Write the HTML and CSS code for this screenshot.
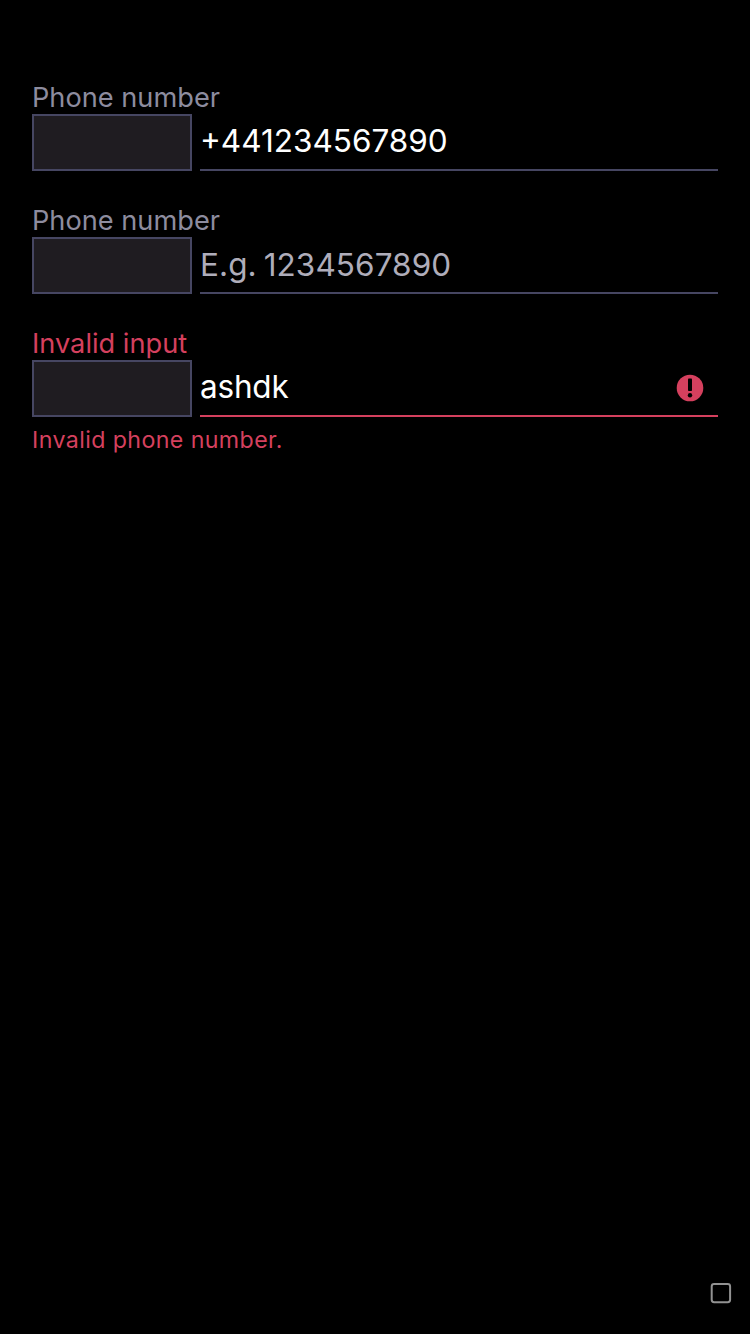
FILE: index.html
```
<!DOCTYPE html>
<html lang="en">
<head>
<meta charset="utf-8">
<title>Phone number</title>
<link rel="stylesheet" href="styles.css">
</head>
<body>
<main class="form">
  <section class="field">
    <div class="label"><span class="label-text">Phone number</span></div>
    <div class="row">
      <div class="country"></div>
      <div class="entry"><span class="value number">+441234567890</span></div>
    </div>
  </section>
  <section class="field">
    <div class="label"><span class="label-text">Phone number</span></div>
    <div class="row">
      <div class="country"></div>
      <div class="entry"><span class="value placeholder">E.g. 1234567890</span></div>
    </div>
  </section>
  <section class="field invalid">
    <div class="label"><span class="label-text">Invalid input</span></div>
    <div class="row">
      <div class="country"></div>
      <div class="entry">
        <span class="value word">ashdk</span>
        <svg class="alert" viewBox="0 0 28 28" aria-hidden="true">
          <circle cx="14" cy="14" r="13.3" fill="#d5405e"/>
          <rect x="12" y="4.5" width="4" height="12.5" rx="0.8" fill="#000"/>
          <circle cx="14" cy="21.2" r="2.2" fill="#000"/>
        </svg>
      </div>
    </div>
    <p class="message"><span class="message-text">Invalid phone number.</span></p>
  </section>
</main>
<footer class="footer">
  <svg class="square" viewBox="0 0 22 22" aria-hidden="true">
    <rect x="1.7" y="2" width="18.4" height="18.2" rx="2.4" fill="none" stroke="#929292" stroke-width="2"/>
  </svg>
</footer>
</body>
</html>
```
FILE: styles.css
```
* { box-sizing: border-box; }
body {
  margin: 0;
  height: 1334px;
  display: flex;
  flex-direction: column;
  justify-content: space-between;
  background: #000;
  color: #fff;
  font-family: Inter, "Liberation Sans", sans-serif;
  overflow: hidden;
}
.form {
  padding: 80px 32px 0;
  display: flex;
  flex-direction: column;
  gap: 32px;
}
.label {
  height: 34px;
  padding-top: 1px;
  font-size: 27.2px;
  line-height: 34px;
  color: #8d8c9f;
  white-space: nowrap;
}
.row { display: flex; gap: 8px; height: 57px; }
.country {
  width: 160px;
  background: #1f1c21;
  border: 2px solid #464662;
}
.entry {
  flex: 1;
  display: flex;
  align-items: center;
  justify-content: space-between;
  border-bottom: 2px solid #464662;
  padding-right: 14px;
}
.value { font-size: 31.5px; line-height: 40px; white-space: nowrap; }
.number { padding-bottom: 1px; }
.word { letter-spacing: -0.2px; padding-bottom: 2px; }
.placeholder { color: #afadba; letter-spacing: 0.08px; word-spacing: -2px; padding-top: 1px; }
.invalid .label, .message { color: #d5405e; }
.invalid .entry { border-color: #d5405e; }
.alert { width: 28px; height: 28px; }
.message {
  margin: 8px 0 0;
  font-size: 23.2px;
  line-height: 30px;
  letter-spacing: 0.4px;
}
.footer {
  display: flex;
  justify-content: flex-end;
  padding: 0 18px 30px;
}
.square { width: 22px; height: 22px; }
```
